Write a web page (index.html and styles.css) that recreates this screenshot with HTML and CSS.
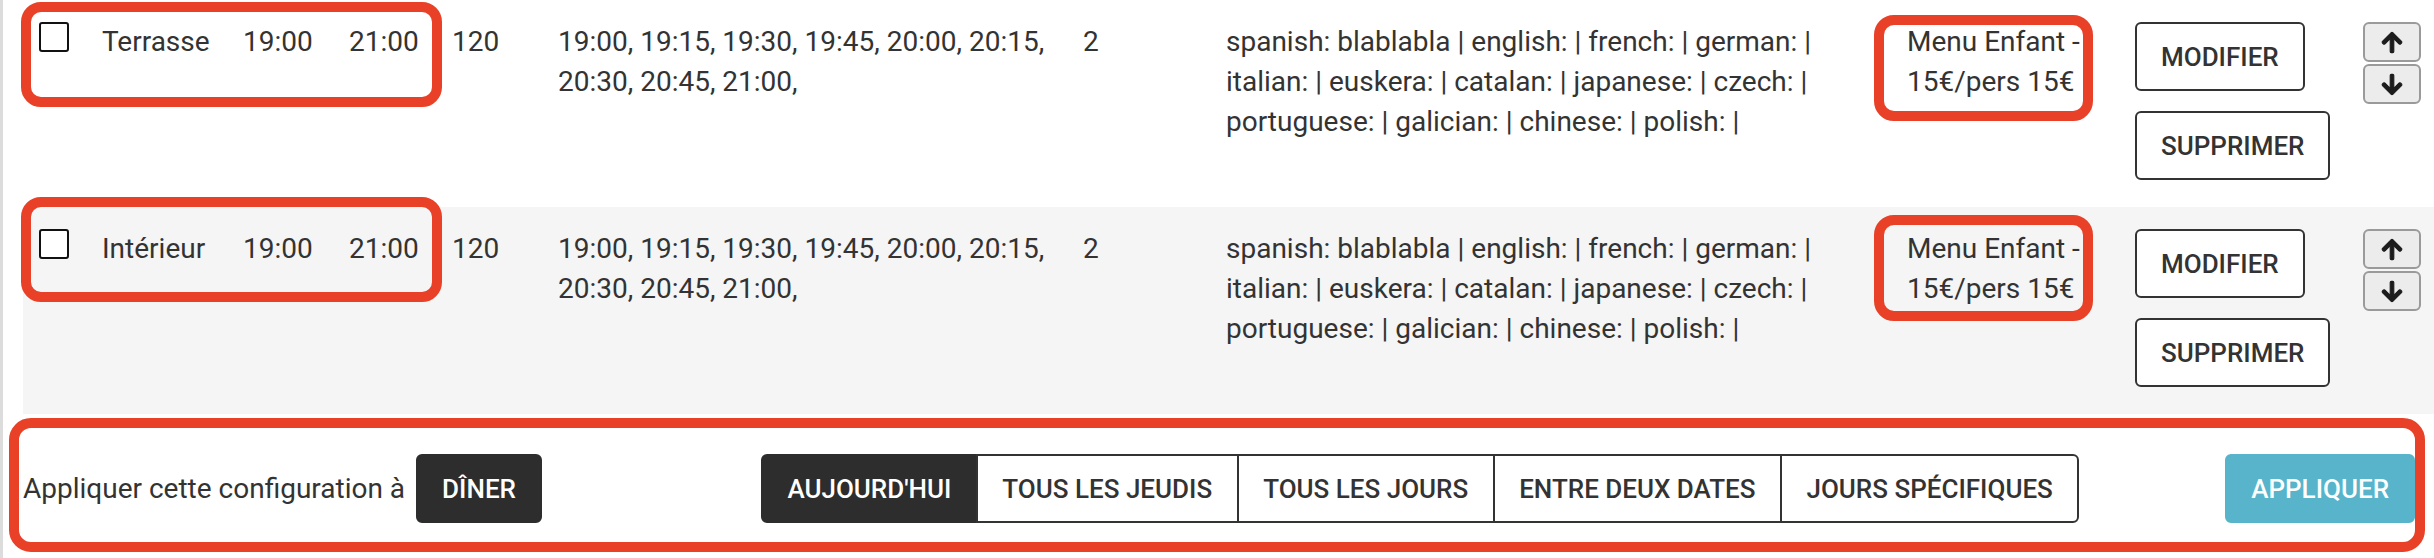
FILE: index.html
```html
<!DOCTYPE html>
<html lang="fr">
<head>
<meta charset="utf-8">
<title>Configuration</title>
<link rel="stylesheet" href="styles.css">
</head>
<body>
<div class="page">
  <div class="rows">
    <div class="row">
      <div class="cell"><input type="checkbox" class="check"></div>
      <div class="cell">Terrasse</div>
      <div class="cell">19:00</div>
      <div class="cell">21:00</div>
      <div class="cell">120</div>
      <div class="cell">19:00, 19:15, 19:30, 19:45, 20:00, 20:15, 20:30, 20:45, 21:00,</div>
      <div class="cell">2</div>
      <div class="cell">spanish: blablabla | english: | french: | german: | italian: | euskera: | catalan: | japanese: | czech: | portuguese: | galician: | chinese: | polish: |</div>
      <div class="cell">Menu Enfant - 15€/pers 15€</div>
      <div class="cell actions">
        <button class="btn btn-block">Modifier</button>
        <button class="btn btn-block">Supprimer</button>
      </div>
      <div class="cell">
        <div class="arrows">
          <button class="arrow" aria-label="up"><svg viewBox="-20 -20 488 552" class="ico"><path d="M34.9 289.5l-22.2-22.2c-9.4-9.4-9.4-24.6 0-33.9L207 39c9.4-9.4 24.6-9.4 33.9 0l194.3 194.3c9.4 9.4 9.4 24.6 0 33.9L413 289.4c-9.5 9.5-25 9.3-34.3-.4L264 168.6V456c0 13.3-10.7 24-24 24h-32c-13.3 0-24-10.7-24-24V168.6L69.2 289.1c-9.3 9.8-24.8 10-34.3.4z"/></svg></button>
          <button class="arrow" aria-label="down"><svg viewBox="-20 -20 488 552" class="ico down"><path d="M34.9 289.5l-22.2-22.2c-9.4-9.4-9.4-24.6 0-33.9L207 39c9.4-9.4 24.6-9.4 33.9 0l194.3 194.3c9.4 9.4 9.4 24.6 0 33.9L413 289.4c-9.5 9.5-25 9.3-34.3-.4L264 168.6V456c0 13.3-10.7 24-24 24h-32c-13.3 0-24-10.7-24-24V168.6L69.2 289.1c-9.3 9.8-24.8 10-34.3.4z"/></svg></button>
        </div>
      </div>
      <div class="mark mark-main first"></div>
      <div class="mark mark-menu first"></div>
    </div>
    <div class="row row-alt">
      <div class="cell"><input type="checkbox" class="check"></div>
      <div class="cell">Intérieur</div>
      <div class="cell">19:00</div>
      <div class="cell">21:00</div>
      <div class="cell">120</div>
      <div class="cell">19:00, 19:15, 19:30, 19:45, 20:00, 20:15, 20:30, 20:45, 21:00,</div>
      <div class="cell">2</div>
      <div class="cell">spanish: blablabla | english: | french: | german: | italian: | euskera: | catalan: | japanese: | czech: | portuguese: | galician: | chinese: | polish: |</div>
      <div class="cell">Menu Enfant - 15€/pers 15€</div>
      <div class="cell actions">
        <button class="btn btn-block">Modifier</button>
        <button class="btn btn-block">Supprimer</button>
      </div>
      <div class="cell">
        <div class="arrows">
          <button class="arrow" aria-label="up"><svg viewBox="-20 -20 488 552" class="ico"><path d="M34.9 289.5l-22.2-22.2c-9.4-9.4-9.4-24.6 0-33.9L207 39c9.4-9.4 24.6-9.4 33.9 0l194.3 194.3c9.4 9.4 9.4 24.6 0 33.9L413 289.4c-9.5 9.5-25 9.3-34.3-.4L264 168.6V456c0 13.3-10.7 24-24 24h-32c-13.3 0-24-10.7-24-24V168.6L69.2 289.1c-9.3 9.8-24.8 10-34.3.4z"/></svg></button>
          <button class="arrow" aria-label="down"><svg viewBox="-20 -20 488 552" class="ico down"><path d="M34.9 289.5l-22.2-22.2c-9.4-9.4-9.4-24.6 0-33.9L207 39c9.4-9.4 24.6-9.4 33.9 0l194.3 194.3c9.4 9.4 9.4 24.6 0 33.9L413 289.4c-9.5 9.5-25 9.3-34.3-.4L264 168.6V456c0 13.3-10.7 24-24 24h-32c-13.3 0-24-10.7-24-24V168.6L69.2 289.1c-9.3 9.8-24.8 10-34.3.4z"/></svg></button>
        </div>
      </div>
      <div class="mark mark-main second"></div>
      <div class="mark mark-menu second"></div>
    </div>
  </div>

  <div class="apply">
    <span class="apply-label">Appliquer cette configuration à</span>
    <button class="btn btn-dark btn-service">Dîner</button>
    <div class="btn-group">
      <button class="btn btn-dark">Aujourd'hui</button>
      <button class="btn">Tous les jeudis</button>
      <button class="btn">Tous les jours</button>
      <button class="btn">Entre deux dates</button>
      <button class="btn">Jours spécifiques</button>
    </div>
    <button class="btn btn-info">Appliquer</button>
  </div>
</div>
</body>
</html>
```

FILE: styles.css
```css
* {
  box-sizing: border-box;
}

body {
  margin: 0;
  font-family: Roboto, "Noto Sans", sans-serif;
  font-size: 28px;
  line-height: 40px;
  color: #333;
  background: #fff;
}

.page {
  border-left: 3px solid #dcdcdc;
  min-height: 558px;
}

.rows {
  margin-left: 20px;
}

.row {
  position: relative;
  display: grid;
  grid-template-columns: 63px 141px 106px 103px 106px 525px 143px 681px 228px 228px 1fr;
  height: 207px;
}

.row-alt {
  background: #f5f5f5;
}

.cell {
  padding: 22px 16px 0;
}

.check {
  appearance: none;
  -webkit-appearance: none;
  display: block;
  width: 30px;
  height: 30px;
  margin: 0;
  border: 2px solid #111;
  border-radius: 3px;
  background: #fff;
}

.actions {
  display: flex;
  flex-direction: column;
  align-items: flex-start;
  gap: 20px;
}

.btn {
  font-family: Roboto, "Noto Sans", sans-serif;
  font-size: 26px;
  font-weight: 500;
  line-height: 40px;
  text-transform: uppercase;
  padding: 13px 24px 12px;
  border: 2px solid #333;
  border-radius: 6px;
  background: #fff;
  color: #333;
  white-space: nowrap;
}

.btn-dark {
  background: #2d2d2d;
  border-color: #2d2d2d;
  color: #fff;
}

.btn-info {
  background: #57b4ca;
  border-color: #57b4ca;
  color: #fff;
  margin-left: auto;
}

.arrows {
  display: flex;
  flex-direction: column;
  gap: 2px;
}

.arrow {
  width: 58px;
  height: 40px;
  padding: 0;
  border: 2px solid #9a9a9a;
  border-radius: 6px;
  background: #ececec;
  display: flex;
  align-items: center;
  justify-content: center;
}

.ico {
  width: 22px;
  height: 25px;
  fill: #1c1c1c;
  stroke: #1c1c1c;
  stroke-width: 24;
  stroke-linejoin: round;
}

.ico.down {
  transform: rotate(180deg);
}

.mark {
  position: absolute;
  border: 10px solid #e84128;
  border-radius: 20px;
  pointer-events: none;
}

.mark-main {
  left: -2px;
  width: 421px;
  height: 105px;
}

.mark-main.first {
  top: 2px;
}

.mark-main.second {
  top: -10px;
}

.mark-menu {
  left: 1851px;
  width: 219px;
  height: 106px;
}

.mark-menu.first {
  top: 15px;
}

.mark-menu.second {
  top: 8px;
}

.apply {
  display: flex;
  align-items: center;
  margin: 4px 9px 0 6px;
  padding: 26px 0 19px 4px;
  border: 10px solid #e84128;
  border-radius: 22px;
}

.btn-service {
  margin-left: 11px;
}

.btn-group {
  display: flex;
  margin-left: 219px;
}

.btn-group .btn {
  border-radius: 0;
  margin-left: -2px;
  padding-left: 24.5px;
  padding-right: 24.5px;
}

.btn-group .btn:first-child {
  margin-left: 0;
  border-radius: 6px 0 0 6px;
}

.btn-group .btn:last-child {
  border-radius: 0 6px 6px 0;
}
```
